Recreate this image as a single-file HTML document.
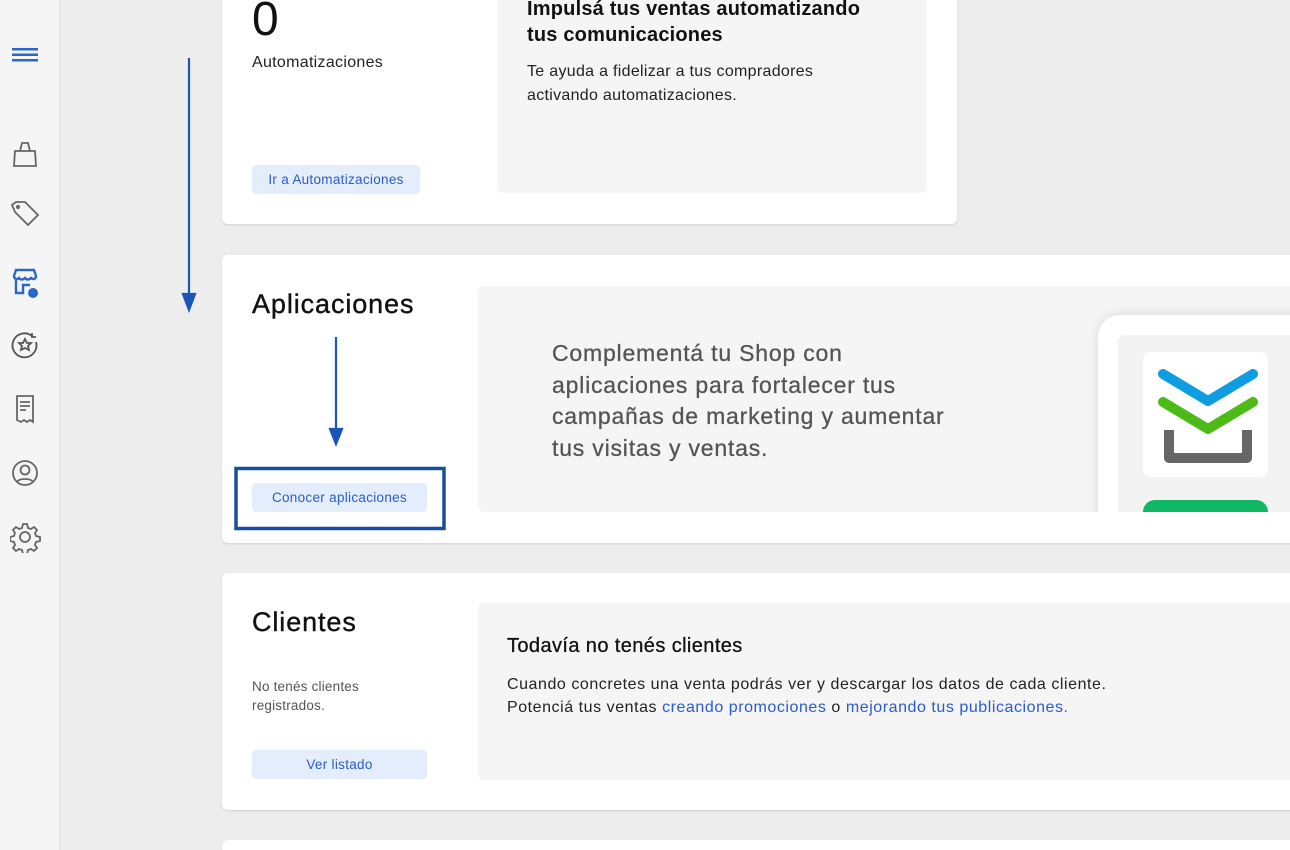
<!DOCTYPE html>
<html><head><meta charset="utf-8"><style>
*{box-sizing:border-box;margin:0;padding:0}
html,body{width:1290px;height:850px;overflow:hidden}
body{background:#ededed;font-family:"Liberation Sans",sans-serif;position:relative;color:#111}
.side{position:absolute;left:0;top:0;width:60px;height:850px;background:#f5f5f5;border-right:1px solid #e4e4e4}
.side svg{position:absolute;left:10px}
.card{position:absolute;background:#fff;border-radius:6px;box-shadow:0 1px 2px rgba(0,0,0,.12)}
.grey{position:absolute;background:#f5f5f5;border-radius:6px}
.btn{position:absolute;background:#e3edfb;color:#2a5bd0;font-size:13.5px;letter-spacing:.3px;border-radius:4px;text-align:center;line-height:29px;height:29px}
h2{position:absolute;font-size:27px;font-weight:normal;color:#111;letter-spacing:.9px;-webkit-text-stroke:.4px #111}
.abs{position:absolute}
a{color:#2a5bd0;text-decoration:none}
</style></head><body>
<div class="side">
<svg style="top:44px" width="30" height="22"><g fill="#2968c8"><rect x="2" y="4" width="26" height="2.5"/><rect x="2" y="9.5" width="26" height="2.5"/><rect x="2" y="15" width="26" height="2.5"/></g></svg>
<svg style="top:138px" width="30" height="32" fill="none" stroke="#666" stroke-width="1.8"><path d="M4 28l1-15h20l1 15z M10 13l2-8h6l2 8"/></svg>
<svg style="top:200px" width="32" height="32" fill="none" stroke="#666" stroke-width="1.8"><path d="M2 5l4-3h9l13 13-10 10L5 12z"/><circle cx="8" cy="7" r="1.2"/></svg>
<svg style="top:266px" width="32" height="34"><path d="M4 10l2-6h18l2 6c0 3-3 4-5 2-2 2-5 2-6 0-2 2-5 2-6 0-2 2-5 1-5-2z M6 13v14h7v-8h7" fill="none" stroke="#2968c8" stroke-width="2.4"/><circle cx="23" cy="27" r="5" fill="#2968c8"/></svg>
<svg style="top:330px" width="32" height="32" fill="none" stroke="#555" stroke-width="1.8"><path d="M26 12A12 12 0 1 1 22 6"/><path d="M22 3v4h4"/><path d="M15 9l2 4h4l-3 3 1 4-4-2-4 2 1-4-3-3h4z"/></svg>
<svg style="top:393px" width="32" height="34" fill="none" stroke="#666" stroke-width="1.8"><path d="M7 3h16v26l-3-2-3 2-3-2-3 2-4-2z M10 9h10 M10 13h10 M10 17h6"/></svg>
<svg style="top:458px" width="32" height="32" fill="none" stroke="#666" stroke-width="1.8"><circle cx="15" cy="15" r="12"/><circle cx="15" cy="12" r="4.5"/><path d="M7 24c2-4 14-4 16 0"/></svg>
<svg style="top:521px" width="32" height="32" fill="none" stroke="#666" stroke-width="1.8"><circle cx="15" cy="16" r="5"/><path d="M13 3h4l1 4 3 1 3-2 3 3-2 3 1 3 4 1v4l-4 1-1 3 2 3-3 3-3-2-3 1-1 4h-4l-1-4-3-1-3 2-3-3 2-3-1-3-4-1v-4l4-1 1-3-2-3 3-3 3 2 3-1z"/></svg>
</div>

<div class="card" style="left:222px;top:-10px;width:735px;height:234px">
<div class="abs" style="left:30px;top:2px;font-size:48px">0</div>
<div class="abs" style="left:30px;top:64px;font-size:16px;color:#222;letter-spacing:.3px">Automatizaciones</div>
<div class="btn" style="left:30px;top:175px;width:168px">Ir a Automatizaciones</div>
<div class="grey" style="left:275px;top:0;width:430px;height:203px">
<div class="abs" style="left:30px;top:6px;font-size:20px;font-weight:bold;line-height:26px;width:365px;color:#111;letter-spacing:.2px">Impulsá tus ventas automatizando tus comunicaciones</div>
<div class="abs" style="left:30px;top:70px;font-size:16px;line-height:24px;width:320px;color:#222;letter-spacing:.3px">Te ayuda a fidelizar a tus compradores activando automatizaciones.</div>
</div></div>

<div class="card" style="left:222px;top:255px;width:1090px;height:288px">
<h2 style="left:30px;top:34px">Aplicaciones</h2>
<div class="btn" style="left:30px;top:228px;width:175px">Conocer aplicaciones</div>
<div class="grey" style="left:256px;top:31px;width:830px;height:226px;overflow:hidden">
<div class="abs" style="left:74px;top:52px;font-size:23px;line-height:31.5px;width:410px;color:#555;letter-spacing:.8px;-webkit-text-stroke:.3px #555">Complementá tu Shop con aplicaciones para fortalecer tus campañas de marketing y aumentar tus visitas y ventas.</div>
<div class="abs" style="left:620px;top:29px;width:250px;height:240px;background:#fff;border-radius:22px;box-shadow:0 0 12px rgba(0,0,0,.12)">
<div class="abs" style="left:20px;top:20px;width:230px;height:220px;background:#f3f3f3;border-radius:6px">
<div class="abs" style="left:25px;top:17px;width:125px;height:125px;background:#fff;border-radius:8px">
<svg width="125" height="125"><path d="M26 78v28h78V78" fill="none" stroke="#666" stroke-width="10" stroke-linejoin="round"/><path d="M20 50l45 27 45-27" fill="none" stroke="#4cbb17" stroke-width="10" stroke-linecap="round" stroke-linejoin="round"/><path d="M20 22l45 27 45-27" fill="none" stroke="#0e9de0" stroke-width="10" stroke-linecap="round" stroke-linejoin="round"/></svg></div>
<div class="abs" style="left:25px;top:165px;width:125px;height:40px;background:#10b866;border-radius:12px"></div>
</div></div></div></div>

<div class="card" style="left:222px;top:573px;width:1090px;height:237px">
<h2 style="left:30px;top:34px">Clientes</h2>
<div class="abs" style="left:30px;top:104px;font-size:13.5px;line-height:19px;color:#555;width:140px;letter-spacing:.2px">No tenés clientes registrados.</div>
<div class="btn" style="left:30px;top:177px;width:175px">Ver listado</div>
<div class="grey" style="left:256px;top:30px;width:830px;height:177px">
<div class="abs" style="left:29px;top:32px;font-size:20px;color:#111;letter-spacing:.4px;-webkit-text-stroke:.3px #111">Todavía no tenés clientes</div>
<div class="abs" style="left:29px;top:70px;font-size:16px;line-height:23px;color:#222;width:720px;letter-spacing:.55px">Cuando concretes una venta podrás ver y descargar los datos de cada cliente.<br>Potenciá tus ventas <a>creando promociones</a> o <a>mejorando tus publicaciones.</a></div>
</div></div>

<div class="card" style="left:222px;top:840px;width:1090px;height:40px"></div>

<svg class="abs" style="left:0;top:0" width="1290" height="850">
<g stroke="#1a56b8" stroke-width="2.2" fill="#1a56b8">
<line x1="189" y1="58" x2="189" y2="298"/><path d="M183 294l6 16 6-16z"/>
<line x1="336" y1="337" x2="336" y2="432"/><path d="M330 429l6 15 6-15z"/>
</g>
<rect x="236" y="468.5" width="208" height="60" fill="none" stroke="#1a4da0" stroke-width="3.5"/>
</svg>
</body></html>
